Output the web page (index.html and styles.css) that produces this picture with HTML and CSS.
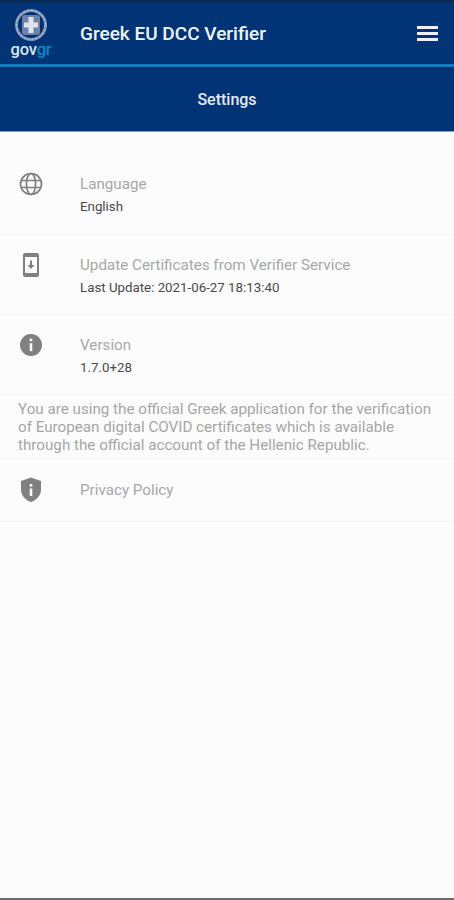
FILE: index.html
```html
<!DOCTYPE html>
<html lang="en">
<head>
    <meta charset="UTF-8">
    <meta name="viewport" content="width=device-width, initial-scale=1.0">
    <title>Greek EU DCC Verifier</title>
    <link rel="stylesheet" href="styles.css">
</head>
<body>
    <div class="app">
        <div class="header">
            <div class="logo">
                <svg class="emblem" width="34" height="34" viewBox="0 0 34 34">
                    <circle cx="17" cy="17" r="14.500" fill="none" stroke="#8394b6" stroke-width="3"/>
                    <circle cx="17" cy="17" r="14.500" fill="none" stroke="#aab5cb" stroke-width="1.500" stroke-dasharray="2 2"/>
                    <rect x="8" y="7" width="18" height="20" rx="3" fill="#6f81a8"/>
                    <rect x="14.500" y="9" width="5" height="16" fill="#dfe3ec"/>
                    <rect x="10" y="14.500" width="14" height="5" fill="#dfe3ec"/>
                </svg>
                <div class="logo-text">gov<span class="logo-gr">gr</span></div>
            </div>
            <div class="app-title">Greek EU DCC Verifier</div>
            <div class="menu-icon"><span></span><span></span><span></span></div>
        </div>
        <div class="page-title">Settings</div>

        <div class="row row-lang">
            <div class="row-icon">
                <svg width="24" height="24" viewBox="0 0 24 24" fill="none" stroke="#808080" stroke-width="1.700">
                    <circle cx="12" cy="12" r="10.500"/>
                    <ellipse cx="12" cy="12" rx="4.600" ry="10.500"/>
                    <path d="M2.500 8.500h19M2.500 15.500h19"/>
                </svg>
            </div>
            <div class="row-text">
                <div class="row-label">Language</div>
                <div class="row-value">English</div>
            </div>
        </div>
        <div class="row">
            <div class="row-icon">
                <svg width="24" height="24" viewBox="0 0 24 24">
                    <path fill="#808080" fill-rule="evenodd" d="M6 0h12a2 2 0 0 1 2 2v20a2 2 0 0 1-2 2H6a2 2 0 0 1-2-2V2a2 2 0 0 1 2-2zM6 4v16h12V4z"/>
                    <path fill="#808080" d="M11 7.500h2V12h2.600L12 16l-3.600-4H11z"/>
                </svg>
            </div>
            <div class="row-text">
                <div class="row-label">Update Certificates from Verifier Service</div>
                <div class="row-value">Last Update: 2021-06-27 18:13:40</div>
            </div>
        </div>
        <div class="row">
            <div class="row-icon">
                <svg width="24" height="24" viewBox="0 0 24 24">
                    <circle cx="12" cy="12" r="11" fill="#808080"/>
                    <rect x="10.700" y="5.600" width="2.600" height="2.600" fill="#fcfcfc"/>
                    <rect x="10.700" y="10.200" width="2.600" height="8" fill="#fcfcfc"/>
                </svg>
            </div>
            <div class="row-text">
                <div class="row-label">Version</div>
                <div class="row-value">1.7.0+28</div>
            </div>
        </div>
        <div class="about">You are using the official Greek application for the verification of European digital COVID certificates which is available through the official account of the Hellenic Republic.</div>
        <div class="row row-link">
            <div class="row-icon">
                <svg width="24" height="26" viewBox="0 0 24 26">
                    <path fill="#808080" d="M12 .500l10 3.500v8.500c0 6-4.200 10.500-10 12.500-5.800-2-10-6.500-10-12.500V4z"/>
                    <rect x="10.700" y="7" width="2.600" height="2.600" fill="#fcfcfc"/>
                    <rect x="10.700" y="11.500" width="2.600" height="7.500" fill="#fcfcfc"/>
                </svg>
            </div>
            <div class="row-text">
                <div class="row-label">Privacy Policy</div>
            </div>
        </div>
    </div>
</body>
</html>
```

FILE: styles.css
```css
html, body {
    height: 100%;
}
body {
    margin: 0;
    background-color: #fcfcfc;
    font-family: Roboto, "Liberation Sans", sans-serif;
}
.app {
    height: 100%;
    box-sizing: border-box;
    border-bottom: 2px solid #6e6e6e;
    overflow: hidden;
}
.header {
    display: flex;
    align-items: center;
    height: 64px;
    box-sizing: border-box;
    padding: 0 16px 0 10px;
    background-color: #003476;
    border-top: 2px solid #0a2a55;
}
.logo {
    display: flex;
    flex-direction: column;
    align-items: center;
    width: 42px;
}
.emblem {
    display: block;
}
.logo-text {
    color: #dfe4ee;
    font-size: 16.500px;
    font-weight: 500;
    line-height: 16px;
    letter-spacing: -0.2px;
}
.logo-gr {
    color: #0d87c4;
}
.app-title {
    flex: 1;
    margin-left: 28px;
    color: #f2f4f8;
    font-size: 19px;
    font-weight: 500;
}
.menu-icon {
    display: flex;
    flex-direction: column;
    gap: 3px;
    width: 21px;
}
.menu-icon span {
    height: 3px;
    background-color: #eef0f5;
}
.page-title {
    height: 64px;
    line-height: 65px;
    border-top: 3px solid #0f7fbf;
    border-bottom: 1px solid #8a9bbd;
    background-color: #003476;
    color: #e6e9f0;
    font-size: 16px;
    font-weight: 500;
    text-align: center;
}
.row {
    display: flex;
    height: 80px;
    box-sizing: border-box;
    padding-top: 18px;
    border-bottom: 1px solid #f4f4f4;
}
.row-lang {
    height: 103px;
    padding-top: 40px;
}
.row-link {
    height: 63px;
    padding-top: 19px;
}
.row-icon {
    display: flex;
    align-items: center;
    justify-content: center;
    width: 62px;
    height: 24px;
    flex-shrink: 0;
}
.row-text {
    padding-left: 18px;
}
.row-label {
    color: #a8a8a8;
    font-size: 15.200px;
    line-height: 24px;
}
.row-value {
    margin-top: 2px;
    color: #4a4a4a;
    font-size: 13.300px;
    line-height: 18px;
}
.about {
    padding: 5px 20px 4px 18px;
    border-bottom: 1px solid #f4f4f4;
    color: #a6a6a6;
    font-size: 15.200px;
    line-height: 18px;
}
```
